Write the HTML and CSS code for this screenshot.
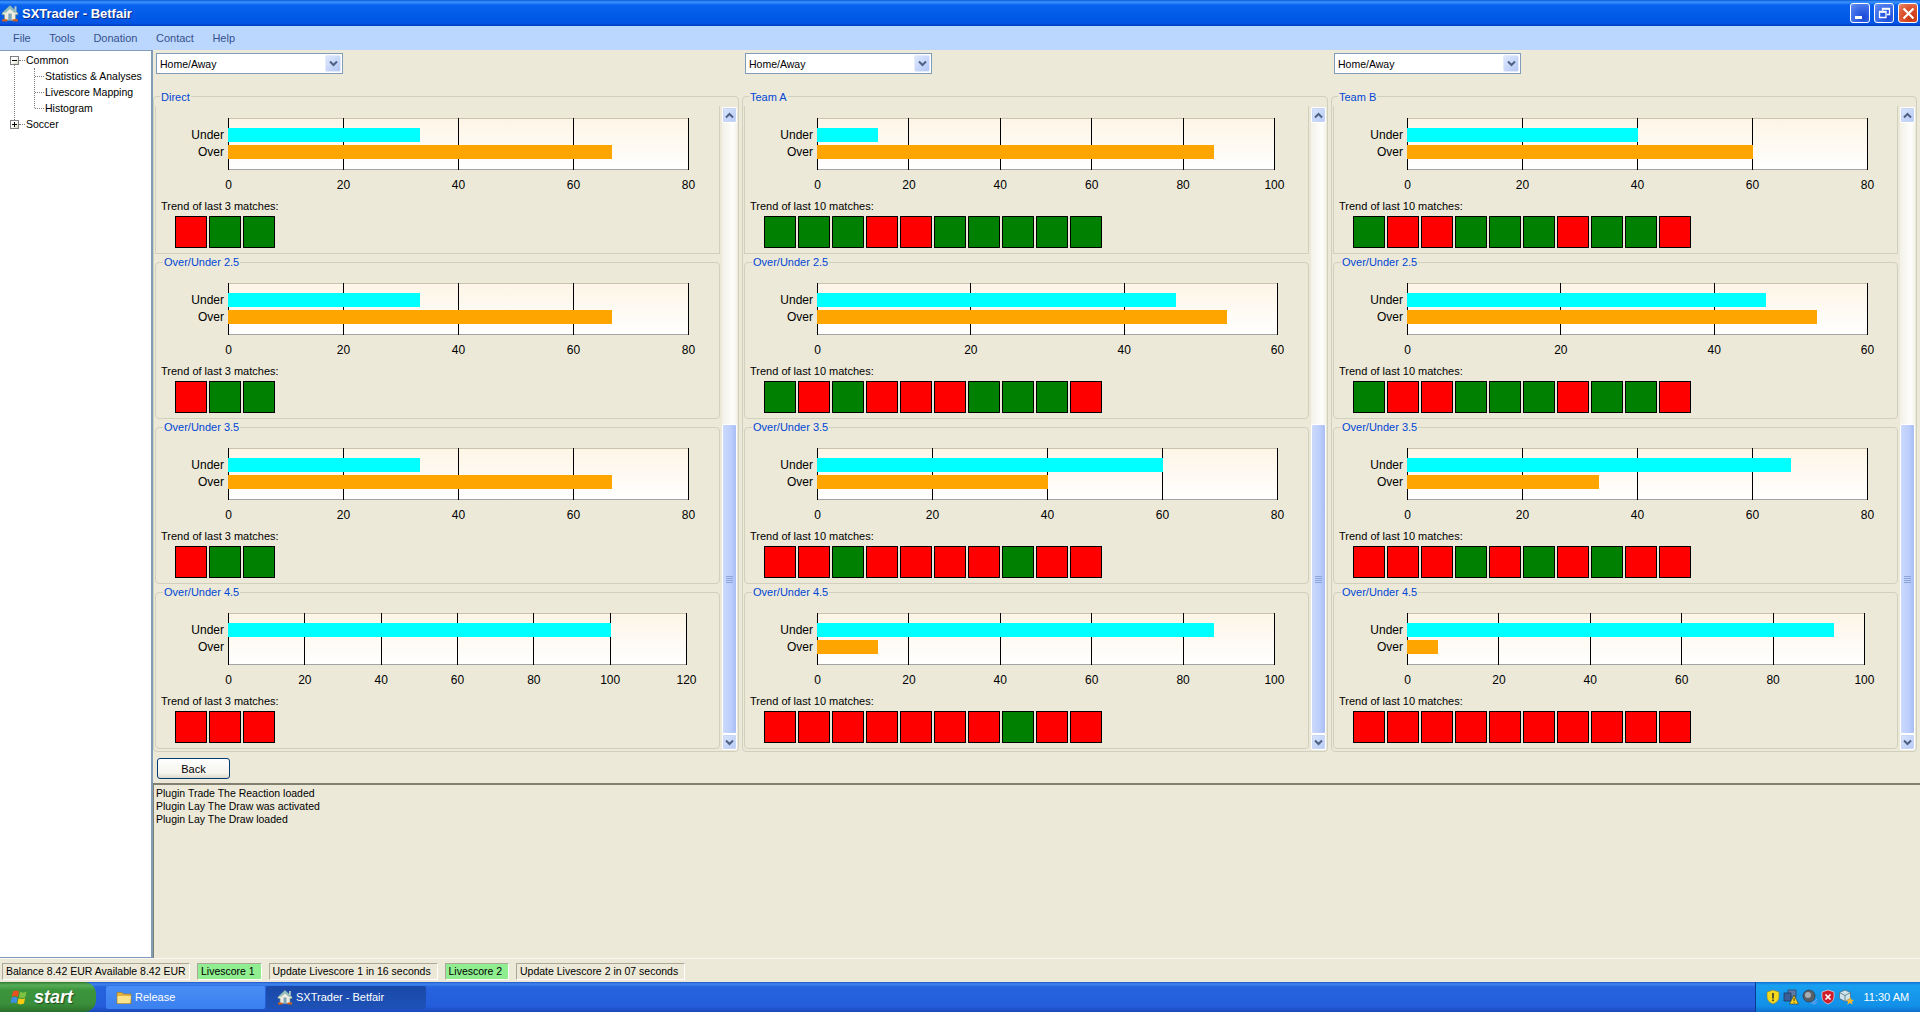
FILE: index.html
```html
<!DOCTYPE html>
<html lang="en">
<head>
  <meta charset="UTF-8" />
  <meta name="viewport" content="width=device-width, initial-scale=1.0" />
  <title>SXTrader - Betfair</title>
  <link rel="stylesheet" href="styles.css">
</head>
<body>
  <svg class="defs" width="0" height="0">
    <symbol id="house" viewBox="0 0 16 16">
      <path d="M1 8 8 1.500 15 8v1.500H13v5H3v-5H1z" fill="#f0ece0" stroke="#6f8f8a" stroke-width=".7"/>
      <path d="M8 1.500 1.500 7.800h2.700L8 4.400l3.800 3.400h2.700z" fill="#8fbcbc"/>
      <rect x="12" y="2" width="1.800" height="4" fill="#b8c8c0"/>
      <rect x="6.500" y="8.500" width="3" height="6" fill="#7fa6b8"/>
      <rect x="1" y="13.500" width="4.500" height="2" fill="#d2601c"/>
      <rect x="10.500" y="13.500" width="4.500" height="2" fill="#d2601c"/>
    </symbol>
  </svg>

  <header class="titlebar">
    <svg class="title-icon"><use href="#house"/></svg>
    <span class="title-text">SXTrader - Betfair</span>
    <div class="win-buttons">
      <div class="win-btn">
        <svg width="19" height="19" viewBox="0 0 19 19"><rect x="4" y="12" width="7" height="3" fill="#fff"/></svg>
      </div>
      <div class="win-btn">
        <svg width="19" height="19" viewBox="0 0 19 19"><path d="M7.500 6.500v-2h7v6h-2.500M4.500 7.500h6.500v6h-6.500z" fill="none" stroke="#fff" stroke-width="1.300"/><path d="M4.500 8h6.500M7.500 5h7" stroke="#fff" stroke-width="1.500"/></svg>
      </div>
      <div class="win-btn win-close">
        <svg width="19" height="19" viewBox="0 0 19 19"><path d="M4.500 4.500l10 10M14.500 4.500l-10 10" stroke="#fff" stroke-width="2.200"/></svg>
      </div>
    </div>
  </header>

  <nav class="menubar">
    <span>File</span>
    <span>Tools</span>
    <span>Donation</span>
    <span>Contact</span>
    <span>Help</span>
  </nav>

  <main class="workspace">
    <aside class="tree">
      <div class="tree-row">
        <span class="expander expander-open"></span><span class="tree-dash"></span><span>Common</span>
      </div>
      <div class="tree-branch">
        <ul class="tree-children">
          <li><span class="tree-dash tree-dash-long"></span><span>Statistics &amp; Analyses</span></li>
          <li><span class="tree-dash tree-dash-long"></span><span>Livescore Mapping</span></li>
          <li><span class="tree-dash tree-dash-long"></span><span>Histogram</span></li>
        </ul>
      </div>
      <div class="tree-row">
        <span class="expander"></span><span class="tree-dash"></span><span>Soccer</span>
      </div>
    </aside>

    <section class="content">
      <div class="columns" id="columns"></div>
      <div class="back-row"><button class="back-btn">Back</button></div>
      <div class="log">
        <p>Plugin Trade The Reaction loaded</p>
        <p>Plugin Lay The Draw was activated</p>
        <p>Plugin Lay The Draw loaded</p>
      </div>
    </section>
  </main>

  <div class="statusbar">
    <span class="status-cell status-balance">Balance 8.42 EUR Available 8.42 EUR</span>
    <span class="status-cell status-live">Livescore 1</span>
    <span class="status-cell status-update">Update Livescore 1 in 16 seconds</span>
    <span class="status-cell status-live">Livescore 2</span>
    <span class="status-cell status-update">Update Livescore 2 in 07 seconds</span>
  </div>

  <footer class="taskbar">
    <div class="start-btn">
      <svg class="start-flag" viewBox="0 0 20 20">
        <path d="M3 4.500c2-1.200 4-1.200 6 0l-1.200 5.500c-2-1.200-4-1.200-6 0z" fill="#e8501f"/>
        <path d="M10 4.800c2 1.100 4 1.100 6.500 0l-1.200 5.400c-2.300 1.100-4.300 1.100-6.400 0z" fill="#7fc241"/>
        <path d="M1.600 11c2-1.200 4-1.200 6 0l-1.200 5.500c-2-1.200-4-1.200-6 0z" fill="#3f8fe8"/>
        <path d="M8.600 11.200c2 1.100 4.200 1.100 6.500 0l-1.200 5.400c-2.300 1.100-4.400 1.100-6.500 0z" fill="#fbc910"/>
      </svg>
      <span>start</span>
    </div>
    <div class="task-btn task-release">
      <svg class="task-icon" viewBox="0 0 16 16">
        <path d="M1 3.500h5l1.500 1.500H15v9.500H1z" fill="#e2b23c" stroke="#a87c1c" stroke-width=".6"/>
        <path d="M1.500 7h13.500l-1 7.200H1.500z" fill="#fbe38e"/>
      </svg>
      <span>Release</span>
    </div>
    <div class="task-btn task-active">
      <svg class="task-icon"><use href="#house"/></svg>
      <span>SXTrader - Betfair</span>
    </div>
    <div class="tray">
      <svg class="tray-icon" viewBox="0 0 16 16">
        <path d="M8 1l6 2v5c0 3.500-3 6-6 7-3-1-6-3.500-6-7V3z" fill="#f3d81e" stroke="#7f7a40" stroke-width=".6"/>
        <rect x="7.200" y="4" width="1.600" height="5.500" fill="#333"/><rect x="7.200" y="10.500" width="1.600" height="1.700" fill="#333"/>
      </svg>
      <svg class="tray-icon" viewBox="0 0 16 16">
        <rect x="5" y="1" width="8" height="7" fill="#5d7aa8" stroke="#2a3e62" stroke-width=".7"/>
        <rect x="1" y="4" width="7" height="8" fill="#3a5f98" stroke="#1f2f50" stroke-width=".7"/>
        <path d="M11 6l4.500 9h-9z" fill="#ffd81c" stroke="#333" stroke-width=".6"/>
        <rect x="10.600" y="9" width=".9" height="3" fill="#222"/><rect x="10.600" y="12.800" width=".9" height="1" fill="#222"/>
      </svg>
      <svg class="tray-icon" viewBox="0 0 16 16">
        <circle cx="7" cy="7" r="6" fill="#5a6068" stroke="#2b2f36" stroke-width=".6"/>
        <circle cx="6" cy="6" r="3" fill="#a8aeb4"/>
        <path d="M9 14c2 0 4-1.500 6-4M11 15c1.500 0 3-1 4-2.500" fill="none" stroke="#a8a8e8" stroke-width=".8"/>
      </svg>
      <svg class="tray-icon" viewBox="0 0 16 16">
        <path d="M8 1l6 2v5c0 3.500-3 6-6 7-3-1-6-3.500-6-7V3z" fill="#d01c2c" stroke="#e8dcdc" stroke-width=".7"/>
        <path d="M5.500 5.500l5 5M10.500 5.500l-5 5" stroke="#fff" stroke-width="1.600"/>
      </svg>
      <svg class="tray-icon" viewBox="0 0 16 16">
        <path d="M7 1l5.500 2.500v6L7 12.500 1.500 9.500v-6z" fill="#cfe4ea" stroke="#4f6f80" stroke-width=".8"/>
        <path d="M1.500 3.500 7 6.500l5.500-3M7 6.500v6" fill="none" stroke="#4f6f80" stroke-width=".8"/>
        <path d="M12 8l1.200 2.600 2.800.3-2 1.900.6 2.700-2.600-1.400-2.600 1.400.6-2.700-2-1.900 2.800-.3z" fill="#f8b62c"/>
      </svg>
      <span class="clock">11:30 AM</span>
    </div>
  </footer>

  <script src="script.js"></script>
</body>
</html>
```

FILE: styles.css
```css
* {
  box-sizing: border-box;
}

html, body {
  margin: 0;
  height: 100%;
}

body {
  width: 1920px;
  height: 1012px;
  overflow: hidden;
  display: flex;
  flex-direction: column;
  font-family: "Liberation Sans", Arial, sans-serif;
  font-size: 11px;
  color: #000;
  background-color: #ece9d8;
}

.defs {
  position: absolute;
}

/* window chrome */
.titlebar {
  height: 26px;
  flex: none;
  display: flex;
  align-items: center;
  padding-left: 1px;
  background: linear-gradient(to bottom, #0a5ad8 0, #3d95ff 2px, #0a63ee 5px, #0058e6 18px, #0454e4 23px, #0040c0 26px);
}

.title-icon {
  width: 18px;
  height: 18px;
}

.title-text {
  margin-left: 3px;
  color: #fff;
  font-size: 13px;
  font-weight: bold;
  text-shadow: 1px 1px 0 #0f2a80;
}

.win-buttons {
  margin-left: auto;
  margin-right: 2px;
  display: flex;
  gap: 4px;
}

.win-btn {
  width: 20px;
  height: 20px;
  border: 1px solid #fff;
  border-radius: 3px;
  background: radial-gradient(circle at 70% 75%, #1a48d8 0, #3c6ce8 55%, #6a90f0 100%);
}

.win-btn svg {
  display: block;
}

.win-close {
  background: radial-gradient(circle at 70% 75%, #c8350e 0, #dd5530 55%, #ea8a68 100%);
}

.menubar {
  height: 24px;
  flex: none;
  display: flex;
  align-items: center;
  gap: 18.500px;
  padding-left: 13px;
  background-color: #bcd7fe;
  color: #34518c;
}

.workspace {
  flex: 1;
  display: flex;
  min-height: 0;
}

/* tree on the left */
.tree {
  width: 153px;
  flex: none;
  padding-top: 1px;
  background-color: #fff;
  border: 1px solid #7f9db9;
  border-left: none;
  border-right-width: 2px;
  font-size: 10.500px;
}

.tree-row {
  height: 16px;
  display: flex;
  align-items: center;
  padding-left: 10px;
}

.expander {
  width: 9px;
  height: 9px;
  border: 1px solid #808080;
  background: linear-gradient(135deg, #fff 40%, #d8d4c4);
  position: relative;
}

.expander::before {
  content: "";
  position: absolute;
  left: 1px;
  top: 3px;
  width: 5px;
  height: 1px;
  background-color: #000;
}

.expander:not(.expander-open)::after {
  content: "";
  position: absolute;
  left: 3px;
  top: 1px;
  width: 1px;
  height: 5px;
  background-color: #000;
}

.tree-dash {
  width: 6px;
  border-top: 1px dotted #808080;
  margin-right: 1px;
}

.tree-dash-long {
  width: 9px;
}

.tree-branch {
  margin-left: 14px;
  margin-top: -4px;
  padding-top: 4px;
  height: 56px;
  margin-bottom: -4px;
  border-left: 1px dotted #808080;
}

.tree-children {
  list-style: none;
  margin: 0 0 0 19px;
  padding: 0;
  height: 40px;
  border-left: 1px dotted #808080;
}

.tree-children li {
  height: 16px;
  display: flex;
  align-items: center;
  white-space: nowrap;
}

/* main area */
.content {
  flex: 1;
  min-width: 0;
  display: flex;
  flex-direction: column;
}

.columns {
  display: flex;
  height: 702px;
  flex: none;
}

.column {
  width: 589px;
  flex: none;
  padding-top: 3px;
}

.column:last-child .chart-labels {
  width: 69px;
}

.column:last-child .axis {
  margin-left: 73px;
}

.combo {
  width: 187px;
  height: 21px;
  margin-left: 3px;
  display: flex;
  align-items: center;
  padding-left: 3px;
  padding-right: 1px;
  background-color: #fff;
  border: 1px solid #7f9db9;
  font-size: 10.500px;
}

.combo-arrow {
  margin-left: auto;
  width: 16px;
  height: 17px;
  display: flex;
  align-items: center;
  justify-content: center;
  border: 1px solid #e4ecfc;
  border-radius: 2px;
  background: linear-gradient(135deg, #dfe8fd, #b4c8f6);
}

.outer-group {
  width: 586px;
  height: 656px;
  margin-top: 22px;
  padding-left: 1px;
  border: 1px solid #d0d0bf;
  border-radius: 4px;
}

.group-legend {
  display: block;
  width: fit-content;
  height: 13px;
  line-height: 13px;
  padding: 0 1px;
  background-color: #ece9d8;
  color: #0046d5;
}

.outer-legend {
  margin: -6px 0 -7px 5px;
  position: relative;
}

.outer-body {
  display: flex;
}

.stack {
  width: 565px;
  display: flex;
  flex-direction: column;
  gap: 8px;
}

.group {
  height: 157px;
  border: 1px solid #d0d0bf;
  border-radius: 4px;
}

.group-first {
  border-top-color: transparent;
  border-image: linear-gradient(to bottom, transparent 9px, #d0d0bf 9px) 1;
}

.group-head {
  display: flow-root;
  height: 20px;
}

.group-head .group-legend {
  margin: -7px 0 0 7px;
  position: relative;
}

/* bar chart */
.chart {
  display: flex;
  align-items: flex-start;
}

.chart-labels {
  width: 68px;
  margin-right: 4px;
  padding-top: 10px;
  display: flex;
  flex-direction: column;
  gap: 3px;
  text-align: right;
  font-size: 12px;
  line-height: 14px;
}

.plot {
  position: relative;
  height: 52px;
  padding-top: 9px;
  display: flex;
  flex-direction: column;
  gap: 3px;
  border-top: 1px solid #c8c4b0;
  border-bottom: 1px solid #a4a4a4;
  background: linear-gradient(to bottom, #fdf5e6, #fff);
}

.gridlines {
  position: absolute;
  top: -1px;
  bottom: -1px;
  left: 0;
  right: 0;
  display: flex;
  justify-content: space-between;
}

.gridlines i {
  width: 1px;
  background-color: #000;
}

.bar {
  position: relative;
  height: 14px;
  flex: none;
}

.bar-under {
  background-color: #00ffff;
}

.bar-over {
  background-color: #ffa500;
}

.axis {
  margin: 8px 0 0 72px;
  display: flex;
  justify-content: space-between;
  font-size: 12px;
  line-height: 14px;
}

.axis span {
  width: 1px;
  display: flex;
  justify-content: center;
}

.trend-title {
  margin: 8px 0 0 5px;
  line-height: 13px;
}

.trend {
  margin: 3px 0 0 19px;
  display: flex;
  gap: 2px;
}

.trend span {
  width: 32px;
  height: 32px;
  border: 1px solid #000;
}

.trend-win {
  background-color: #008000;
}

.trend-loss {
  background-color: #ff0000;
}

/* scrollbar */
.scrollbar {
  width: 15px;
  height: 643px;
  margin: 10px 0 0 2px;
  display: flex;
  flex-direction: column;
  background: linear-gradient(to right, #f3f1e8, #fdfdfb 70%, #f5f4ec);
}

.scroll-btn {
  height: 16px;
  flex: none;
  display: flex;
  align-items: center;
  justify-content: center;
  border: 1px solid #fff;
  border-radius: 2px;
  background: linear-gradient(135deg, #dbe6fd, #b6caf7);
  box-shadow: 0 0 0 1px #c9d6f3 inset;
}

.scroll-track {
  height: 301px;
  flex: none;
}

.scroll-thumb {
  flex: 1;
  display: flex;
  flex-direction: column;
  align-items: center;
  justify-content: center;
  gap: 1px;
  border: 1px solid #fff;
  border-radius: 2px;
  background: linear-gradient(to right, #cbd9fc, #bccefb 60%, #a9bdf5);
}

.scroll-thumb i {
  width: 7px;
  height: 1px;
  background-color: #8ea5dc;
}

/* bottom of the main area */
.back-row {
  height: 31px;
  flex: none;
  padding: 6px 0 0 4px;
}

.back-btn {
  display: block;
  width: 73px;
  height: 21px;
  padding: 0;
  font-family: inherit;
  font-size: 11px;
  color: #000;
  border: 1px solid #003c74;
  border-radius: 3px;
  background: linear-gradient(to bottom, #fff, #f4f3ec 75%, #dcd8ca);
}

.log {
  flex: 1;
  padding: 2px 0 0 2px;
  border-top: 2px solid #808070;
  border-left: 1px solid #808070;
  font-size: 10.500px;
  line-height: 13px;
}

.log p {
  margin: 0;
}

.statusbar {
  height: 24px;
  flex: none;
  display: flex;
  align-items: center;
  gap: 7px;
  padding: 1px 0 0 2px;
  border-top: 1px solid #f8f7f0;
  font-size: 10.500px;
}

.status-cell {
  height: 17px;
  display: flex;
  align-items: center;
  padding: 0 3px;
  border: 1px solid;
  border-color: #aca899 #fff #fff #aca899;
  white-space: nowrap;
}

.status-balance {
  width: 188px;
}

.status-live {
  background-color: #90ee90;
  width: 64.500px;
}

.status-update {
  width: 169px;
}

/* xp taskbar */
.taskbar {
  height: 30px;
  flex: none;
  display: flex;
  align-items: center;
  color: #fff;
  background: linear-gradient(to bottom, #1f54c8 0, #3f88ee 2px, #2663de 5px, #245ddb 24px, #1b48b8 30px);
}

.start-btn {
  width: 96px;
  height: 30px;
  flex: none;
  display: flex;
  align-items: center;
  gap: 4px;
  padding-left: 10px;
  border-radius: 0 12px 12px 0;
  background: linear-gradient(to bottom, #2f7a2f 0, #58ad58 3px, #3c963c 8px, #3a8f3a 22px, #2a6f2a 30px);
  font-size: 18px;
  font-weight: bold;
  font-style: italic;
  text-shadow: 1px 1px 1px #1c4a1c;
}

.start-flag {
  width: 20px;
  height: 20px;
}

.task-btn {
  height: 23px;
  display: flex;
  align-items: center;
  gap: 3px;
  border-radius: 2px;
}

.task-btn span {
  white-space: nowrap;
}

.task-release {
  width: 159px;
  margin-left: 10px;
  padding-left: 10px;
  background: linear-gradient(to bottom, #4a8df5, #3a80ef);
}

.task-active {
  width: 160px;
  margin-left: 1px;
  padding-left: 11px;
  background: linear-gradient(to bottom, #1a49a8, #1e52b7);
}

.task-icon {
  width: 16px;
  height: 16px;
  flex: none;
}

.tray {
  margin-left: auto;
  width: 165px;
  height: 30px;
  display: flex;
  align-items: center;
  gap: 2.300px;
  padding-left: 9px;
  border-left: 1px solid #0c3a90;
  background: linear-gradient(to bottom, #0d6fd8 0, #18a0f0 3px, #1290e8 24px, #0f6fd0 30px);
}

.tray-icon {
  width: 16px;
  height: 16px;
  flex: none;
}

.clock {
  margin-left: 7px;
  white-space: nowrap;
}
```

FILE: script.js
```js
// one entry per column, each holds the four over/under blocks
const columns = [
  {
    title: 'Direct',
    games: 3,
    charts: [
      { title: 'Direct', under: 33.3, over: 66.7, max: 80, width: 461, trend: 'LWW' },
      { title: 'Over/Under 2.5', under: 33.3, over: 66.7, max: 80, width: 461, trend: 'LWW' },
      { title: 'Over/Under 3.5', under: 33.3, over: 66.7, max: 80, width: 461, trend: 'LWW' },
      { title: 'Over/Under 4.5', under: 100, over: 0, max: 120, width: 459, trend: 'LLL' },
    ],
  },
  {
    title: 'Team A',
    games: 10,
    charts: [
      { title: 'Team A', under: 13.3, over: 86.7, max: 100, width: 458, trend: 'WWWLLWWWWW' },
      { title: 'Over/Under 2.5', under: 46.7, over: 53.3, max: 60, width: 461, trend: 'WLWLLLWWWL' },
      { title: 'Over/Under 3.5', under: 60, over: 40, max: 80, width: 461, trend: 'LLWLLLLWLL' },
      { title: 'Over/Under 4.5', under: 86.7, over: 13.3, max: 100, width: 458, trend: 'LLLLLLLWLL' },
    ],
  },
  {
    title: 'Team B',
    games: 10,
    charts: [
      { title: 'Team B', under: 40, over: 60, max: 80, width: 461, trend: 'WLLWWWLWWL' },
      { title: 'Over/Under 2.5', under: 46.7, over: 53.3, max: 60, width: 461, trend: 'WLLWWWLWWL' },
      { title: 'Over/Under 3.5', under: 66.7, over: 33.3, max: 80, width: 461, trend: 'LLLWLWLWLL' },
      { title: 'Over/Under 4.5', under: 93.3, over: 6.7, max: 100, width: 458, trend: 'LLLLLLLLLL' },
    ],
  },
];

function chartHtml(chart, games, first) {
  const ticks = [];
  for (let v = 0; v <= chart.max; v += 20) ticks.push(v);

  const squares = chart.trend.split('').map(t =>
    `<span class="${t === 'W' ? 'trend-win' : 'trend-loss'}"></span>`
  ).join('');

  return `
    <div class="group ${first ? 'group-first' : ''}">
      <div class="group-head">
        ${first ? '' : `<span class="group-legend">${chart.title}</span>`}
      </div>
      <div class="chart">
        <div class="chart-labels"><span>Under</span><span>Over</span></div>
        <div class="plot" style="width:${chart.width}px">
          <div class="gridlines">${ticks.map(() => '<i></i>').join('')}</div>
          <div class="bar bar-under" style="width:${chart.under / chart.max * 100}%"></div>
          <div class="bar bar-over" style="width:${chart.over / chart.max * 100}%"></div>
        </div>
      </div>
      <div class="axis" style="width:${chart.width}px">
        ${ticks.map(v => `<span>${v}</span>`).join('')}
      </div>
      <div class="trend-title">Trend of last ${games} matches:</div>
      <div class="trend">${squares}</div>
    </div>`;
}

function columnHtml(col) {
  return `
    <div class="column">
      <div class="combo">
        <span>Home/Away</span>
        <span class="combo-arrow">
          <svg width="9" height="7" viewBox="0 0 9 7"><path d="M1 1.500l3.500 3.500L8 1.500" fill="none" stroke="#4d6185" stroke-width="2"/></svg>
        </span>
      </div>
      <div class="outer-group">
        <span class="group-legend outer-legend">${col.title}</span>
        <div class="outer-body">
          <div class="stack">
            ${col.charts.map((c, i) => chartHtml(c, col.games, i === 0)).join('')}
          </div>
          <div class="scrollbar">
            <div class="scroll-btn">
              <svg width="9" height="7" viewBox="0 0 9 7"><path d="M1 5.500L4.500 2 8 5.500" fill="none" stroke="#4d6185" stroke-width="2"/></svg>
            </div>
            <div class="scroll-track"></div>
            <div class="scroll-thumb"><i></i><i></i><i></i><i></i></div>
            <div class="scroll-btn">
              <svg width="9" height="7" viewBox="0 0 9 7"><path d="M1 1.500L4.500 5 8 1.500" fill="none" stroke="#4d6185" stroke-width="2"/></svg>
            </div>
          </div>
        </div>
      </div>
    </div>`;
}

document.getElementById('columns').innerHTML = columns.map(columnHtml).join('');
```
